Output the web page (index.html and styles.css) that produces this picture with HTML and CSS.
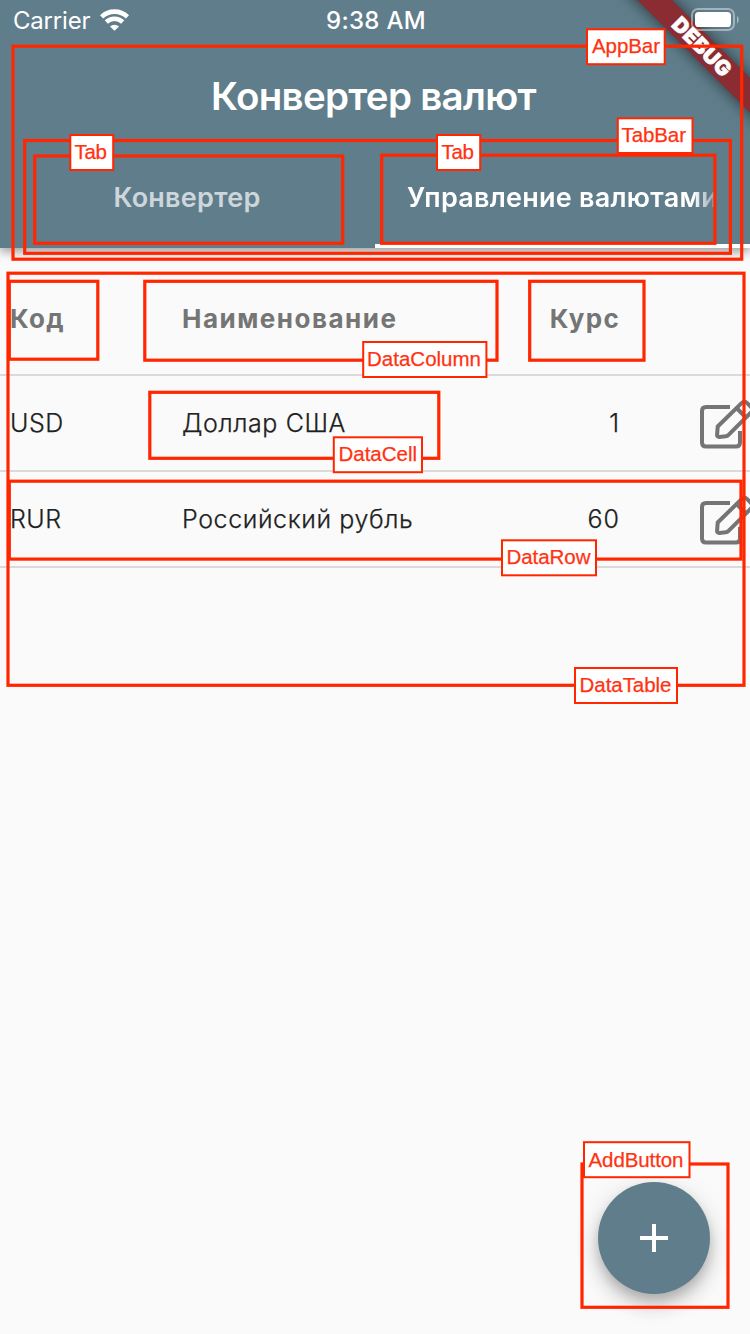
FILE: index.html
```html
<!DOCTYPE html>
<html lang="ru">
<head>
<meta charset="utf-8">
<title>Конвертер валют</title>
<link rel="stylesheet" href="styles.css">
</head>
<body>
<div class="screen">
  <header class="appbar">
    <div class="status">
      <div class="network">
        <span class="carrier">Carrier</span>
        <svg class="wifi" width="29" height="22" viewBox="0 0 29 22">
          <g fill="none" stroke="#fff" stroke-width="4.600">
            <path d="M1.600 7.800A18.600 18.600 0 0 1 27.400 7.800"/>
            <path d="M6.300 13A11.800 11.800 0 0 1 22.700 13"/>
          </g>
          <path fill="#fff" d="M14.500 21.800L10 17.400A6.600 6.600 0 0 1 19 17.400Z"/>
        </svg>
      </div>
      <span class="time">9:38 AM</span>
      <svg class="battery" width="49" height="24" viewBox="0 0 49 24">
        <rect x="2" y="1" width="42" height="21" rx="6" fill="none" stroke="#fff" stroke-opacity=".42" stroke-width="2"/>
        <rect x="5" y="4" width="36" height="15" rx="3.6" fill="#fff"/>
        <path d="M47 8C49.300 9 49.300 14.500 47 15.500Z" fill="#fff" fill-opacity=".45"/>
      </svg>
    </div>
    <h1 class="title">Конвертер валют</h1>
    <nav class="tabs">
      <div class="tab"><span class="tab-text">Конвертер</span></div>
      <div class="tab active"><span class="tab-text long">Управление валютами</span></div>
    </nav>
  </header>

  <main class="table">
    <div class="row head">
      <span class="code">Код</span><span class="name">Наименование</span><span class="rate">Курс</span><span></span>
    </div>
    <div class="row usd">
      <span class="code">USD</span><span class="name">Доллар США</span><span class="rate">1</span>
      <svg class="edit" width="60" height="52" viewBox="0 0 60 52"><use href="#pencil"/></svg>
    </div>
    <div class="row rur">
      <span class="code">RUR</span><span class="name">Российский рубль</span><span class="rate">60</span>
      <svg class="edit" width="60" height="52" viewBox="0 0 60 52"><use href="#pencil"/></svg>
    </div>
  </main>

  <button class="fab" aria-label="Добавить">
    <svg width="28" height="28" viewBox="0 0 28 28"><path d="M14 0V28M0 14H28" stroke="#fff" stroke-width="4"/></svg>
  </button>

  <svg class="banner" width="160" height="160" viewBox="590 0 160 160">
    <path class="ribbon" d="M617.500 -20L652 -20L770 98L770 132.500Z"/>
    <text class="debug" transform="translate(702 46) rotate(45)" x="-36.500" y="8" textLength="74">DEBUG</text>
  </svg>

  <svg class="notes" width="750" height="1334" viewBox="0 0 750 1334">
    <defs>
      <g id="pencil" fill="none" stroke="#757575" stroke-width="4">
        <path d="M30 10H6Q2 10 2 14V45.500Q2 49.500 6 49.500H36Q40 49.500 40 45.500V34"/>
        <path stroke-linejoin="round" d="M17.700 29.500L41.300 6.400Q44.500 3.500 47.500 6.400L51 10Q53.500 13 51 15.500L28.300 38.200Q27.300 39.200 25.900 39.300L19.300 39.900Q17 40 17.100 37.800Z"/>
        <path d="M36.500 11L45 19.500"/>
      </g>
    </defs>
    <g class="frames">
      <rect x="13" y="46.200" width="728.700" height="213"/>
      <rect x="24.700" y="140.500" width="705.700" height="112.800"/>
      <rect x="34.700" y="156" width="308" height="87.300"/>
      <rect x="381.700" y="155.200" width="333.200" height="88.100"/>
      <rect x="8" y="273.200" width="736" height="412.100"/>
      <rect x="9.300" y="281.300" width="88.500" height="77.900"/>
      <rect x="144.800" y="281.300" width="352.200" height="78.900"/>
      <rect x="529.700" y="281.300" width="114.300" height="78.900"/>
      <rect x="149.800" y="392.300" width="289" height="66"/>
      <rect x="9.300" y="481.200" width="731.700" height="77.900"/>
      <rect x="582" y="1164" width="146" height="143.300"/>
    </g>
    <g class="plates">
      <rect x="587" y="29.300" width="77.700" height="34.900"/>
      <rect x="617.800" y="118.300" width="74.700" height="34.700"/>
      <rect x="70.300" y="135" width="42.900" height="35"/>
      <rect x="437" y="135" width="43.200" height="35"/>
      <rect x="363.200" y="342" width="123.200" height="35"/>
      <rect x="333.800" y="437.300" width="88.200" height="34.900"/>
      <rect x="502" y="540.300" width="94" height="35"/>
      <rect x="575" y="668" width="102" height="35"/>
      <rect x="584" y="1142.200" width="105.500" height="35"/>
    </g>
    <g class="labels">
      <text x="592" y="53" textLength="68">AppBar</text>
      <text x="621.500" y="142" textLength="64.500">TabBar</text>
      <text x="74.500" y="159.300" textLength="32.500">Tab</text>
      <text x="441.500" y="159.300" textLength="32.500">Tab</text>
      <text x="367" y="366.200" textLength="114">DataColumn</text>
      <text x="338.500" y="461.300" textLength="78.500">DataCell</text>
      <text x="506.500" y="564.300" textLength="84">DataRow</text>
      <text x="579.500" y="692.200" textLength="92">DataTable</text>
      <text x="588.500" y="1167.200" textLength="95">AddButton</text>
    </g>
  </svg>
</div>
</body>
</html>
```
FILE: styles.css
```css
body { margin: 0; }

.screen {
  position: relative;
  width: 750px;
  height: 1334px;
  overflow: hidden;
  background: #fafafa;
  font-family: Inter, "Noto Sans", sans-serif;
}

.appbar {
  display: flex;
  flex-direction: column;
  height: 248px;
  background: #607d8b;
  color: #fff;
  box-shadow: 0 4px 8px rgba(0, 0, 0, .2), 0 3px 12px rgba(0, 0, 0, .2);
}

.status {
  display: grid;
  grid-template-columns: 1fr auto 1fr;
  align-items: center;
  height: 40px;
  padding: 0 11px 0 13px;
}
.network { display: flex; align-items: center; gap: 10px; }
.carrier { padding-top: 1px; font-size: 24px; letter-spacing: -.2px; }
.time { padding-top: 1px; font-size: 24px; font-weight: 500; letter-spacing: .3px; }
.battery { position: relative; z-index: 2; justify-self: end; }

.title {
  margin: 0;
  height: 112px;
  line-height: 112px;
  padding-right: 3px;
  text-align: center;
  font-size: 38.5px;
  font-weight: 600;
  letter-spacing: -.7px;
}

.tabs { display: flex; height: 96px; }
.tab {
  box-sizing: border-box;
  width: 375px;
  height: 96px;
  padding: 0 33px 0 32px;
  border-bottom: 4px solid transparent;
  line-height: 92px;
  text-align: center;
  font-size: 27px;
  font-weight: 600;
  color: rgba(255, 255, 255, .7);
}
.tab.active { border-color: #fff; color: #fff; }
.tab-text { display: block; letter-spacing: .25px; }
.tab-text.long {
  width: 311px;
  overflow: hidden;
  text-align: left;
  white-space: nowrap;
  mask-image: linear-gradient(to right, #000 92%, transparent 102%);
}

.table { padding-top: 16px; }
.row {
  display: grid;
  grid-template-columns: 172px 300px 138px 60px;
  align-items: center;
  box-sizing: border-box;
  height: 96px;
  padding-left: 10px;
  border-bottom: 2px solid #dadada;
  color: #212121;
  font-size: 25px;
  font-weight: 300;
  -webkit-text-stroke: .25px currentColor;
  white-space: nowrap;
}
.row.head {
  height: 112px;
  padding-bottom: 2px;
  color: #757575;
  font-size: 26px;
  font-weight: 700;
  -webkit-text-stroke: 0;
}
.code { letter-spacing: .5px; }
.name { letter-spacing: .6px; }
.rate { text-align: right; letter-spacing: 1px; }
.head .code { letter-spacing: 1.3px; }
.head .name { letter-spacing: 1.5px; }
.head .rate { letter-spacing: 1.3px; }
.edit { margin-left: 80px; }

.fab {
  position: absolute;
  right: 40px;
  bottom: 40px;
  display: grid;
  place-items: center;
  width: 112px;
  height: 112px;
  padding: 0;
  border: 0;
  border-radius: 50%;
  background: #607d8b;
  box-shadow: 0 6px 10px rgba(0, 0, 0, .12), 0 12px 20px rgba(0, 0, 0, .18), 0 2px 30px rgba(0, 0, 0, .08);
}

.banner { position: absolute; top: 0; right: 0; z-index: 1; }
.ribbon { fill: #8b2c32; filter: drop-shadow(0 0 8px rgba(0, 0, 0, .6)); }
.debug { fill: #fff; stroke: #fff; stroke-width: .7px; font-size: 20.8px; font-weight: 900; }

.notes { position: absolute; top: 0; left: 0; z-index: 3; }
.frames { fill: none; stroke: #ff2600; stroke-width: 3.2px; }
.plates { fill: #fff; stroke: #ff2600; stroke-width: 2px; }
.labels { fill: #ff3312; stroke: #ff3312; stroke-width: .25px; font-family: "Liberation Sans", sans-serif; font-size: 20.5px; }
```
